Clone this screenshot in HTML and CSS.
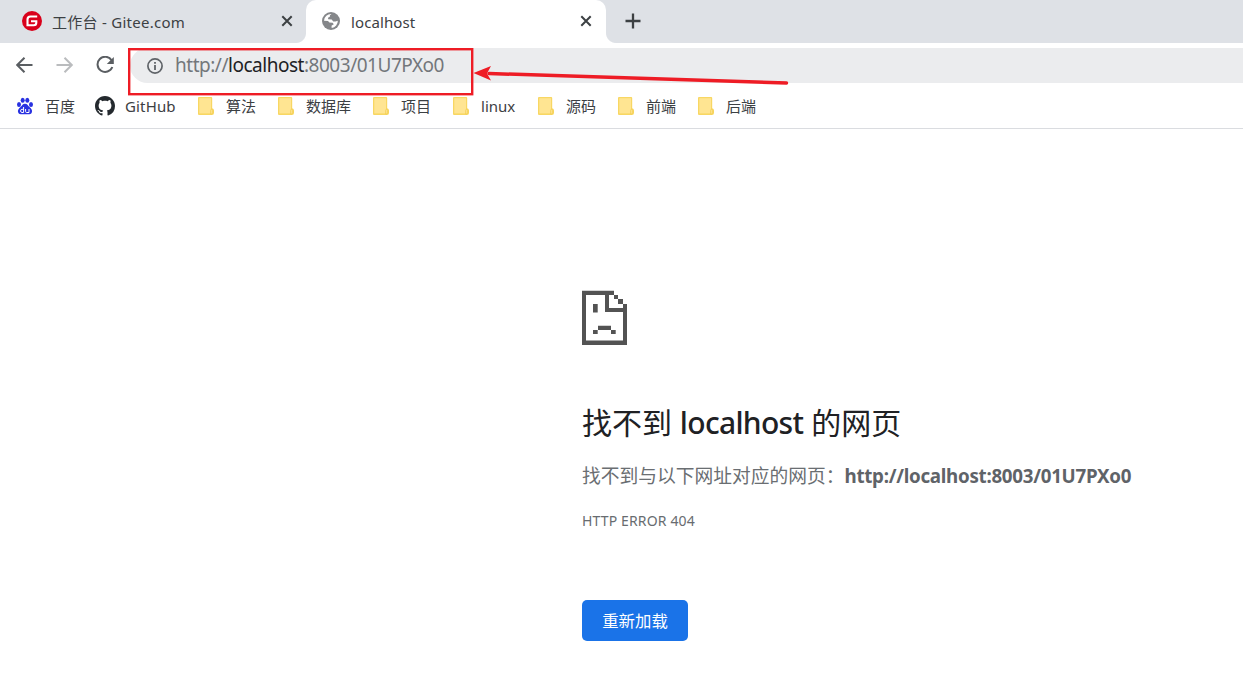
FILE: index.html
```
<!DOCTYPE html>
<html lang="zh-CN">
<head>
<meta charset="utf-8">
<title>localhost</title>
<link rel="stylesheet" href="styles.css">
</head>
<body>
<svg class="defs" width="0" height="0" aria-hidden="true">
  <symbol id="folder" viewBox="0 0 20 20">
    <path d="M3 1h12.200q1 0 1 1v10.200q1.800 .4 1.800 2.300v2.500q0 2-2 2H3q-1 0-1-1V2q0-1 1-1z" fill="#f8d763"/>
    <path d="M3.300 2.200h11.700v15.200H3.300z" fill="#ffe592"/>
    <path d="M14.700 18v-3.500q0-1.300 1-1.300t1 1.300v2q0 1.500-1.300 1.500z" fill="#ffe592" stroke="#f1ca48" stroke-width=".7"/>
  </symbol>
  <symbol id="close" viewBox="0 0 12 12">
    <path d="M1.300 1.300l9.400 9.400M10.700 1.300l-9.400 9.400" stroke="#3c4043" stroke-width="2" fill="none"/>
  </symbol>
</svg>

<header class="browser">
  <div class="tabs">
    <div class="tab tab-gitee">
      <svg class="fav" width="20" height="20" viewBox="0 0 20 20"><circle cx="10" cy="10" r="10" fill="#d9001b"/><path d="M15.200 5.500H8.500Q5.500 5.500 5.500 8.500v5.700h6.300q2.500 0 2.500-2.500v-1.500H9" fill="none" stroke="#fff" stroke-width="2.100"/></svg>
      <span class="tab-title t-gitee">工作台 - Gitee.com</span>
      <svg class="close" width="12" height="12"><use href="#close"/></svg>
    </div>
    <div class="tab tab-active">
      <svg class="globe" width="18" height="18" viewBox="0 0 18 18"><circle cx="9" cy="9" r="9" fill="#85878a"/><path d="M9.500 2.100Q7.300 3.200 7.800 4.700L6 5.700l.2 1.600 3.500.2 1.500 2h2.300l2.300-.7A7 7 0 0 1 9.700 16l-.2-2.200 2.300-1.600-1.200-1.400-3.200-.2L6 9.100 2 8.700a7 7 0 0 1 7.500-6.600z" fill="#fff"/><path d="M2 9.500l3.200.5 2.300 2.100v3.700A7 7 0 0 1 2 9.500z" fill="#85878a"/></svg>
      <span class="tab-title t-local">localhost</span>
      <svg class="close" width="12" height="12"><use href="#close"/></svg>
    </div>
    <svg class="plus" width="16" height="16" viewBox="0 0 16 16"><path d="M8 .5v15M.5 8h15" stroke="#3c4043" stroke-width="2.300"/></svg>
  </div>

  <div class="toolbar">
    <svg width="18" height="18" viewBox="0 0 18 18"><path d="M16.500 9H2M8.500 1.700L1.200 9l7.300 7.300" fill="none" stroke="#5a5e62" stroke-width="2"/></svg>
    <svg width="18" height="18" viewBox="0 0 18 18"><path d="M.5 9h15M8.500 1.700L15.800 9l-7.300 7.300" fill="none" stroke="#babcbe" stroke-width="2"/></svg>
    <svg width="18" height="18" viewBox="0 0 18 18"><path d="M15.600 4.300A7.600 7.600 0 1 0 16.300 11" fill="none" stroke="#5a5e62" stroke-width="2"/><path d="M17.800 1v7h-7z" fill="#5a5e62"/></svg>
    <div class="omnibox">
      <svg class="info" width="16" height="16" viewBox="0 0 16 16"><circle cx="8" cy="8" r="7.100" fill="none" stroke="#5f6368" stroke-width="1.700"/><path d="M8 7v5M8 4v1.800" stroke="#5f6368" stroke-width="1.800"/></svg>
      <span class="url">http://<b>localhost</b>:8003/01U7PXo0</span>
    </div>
  </div>

  <nav class="bookmarks">
    <a class="bm"><svg width="20" height="20" viewBox="0 0 20 20"><g fill="#2932e1"><ellipse cx="4" cy="8.600" rx="2" ry="2.500"/><ellipse cx="7.700" cy="4.200" rx="2" ry="2.500"/><ellipse cx="12.300" cy="4.200" rx="2" ry="2.500"/><ellipse cx="16" cy="8.600" rx="2" ry="2.500"/><path d="M10 7.800c2.200 0 3 1.800 4.500 3.300 2 1.800 3.200 3.400 2.300 5.500-.8 2.100-3 1.700-6.800 1.700s-6 .4-6.800-1.700c-.9-2.100.3-3.700 2.300-5.500C7 9.600 7.800 7.800 10 7.800z"/></g><path d="M8.600 11v5.500H6.900q-1.300 0-1.300-1.600t1.300-1.600h1.700M10.600 13v2.500q0 1 1 1H14V13" fill="none" stroke="#fff" stroke-width="1"/></svg><span>百度</span></a>
    <a class="bm"><svg width="20" height="20" viewBox="0 0 16 16"><path fill="#24292e" d="M8 0C3.580 0 0 3.580 0 8c0 3.540 2.290 6.530 5.470 7.590.4.070.55-.17.55-.38 0-.19-.01-.82-.01-1.490-2.010.37-2.530-.49-2.690-.94-.09-.23-.48-.94-.82-1.130-.28-.15-.68-.52-.01-.53.63-.01 1.080.58 1.230.82.72 1.210 1.870.87 2.330.66.07-.52.28-.87.51-1.070-1.780-.2-3.640-.89-3.640-3.950 0-.87.31-1.590.82-2.150-.08-.2-.36-1.020.08-2.120 0 0 .67-.21 2.200.82.64-.18 1.320-.27 2-.27s1.360.09 2 .27c1.530-1.040 2.200-.82 2.200-.82.44 1.100.16 1.920.08 2.120.51.56.82 1.270.82 2.150 0 3.070-1.870 3.750-3.650 3.950.29.25.54.73.54 1.480 0 1.070-.01 1.930-.01 2.200 0 .21.15.46.55.38A8.010 8.010 0 0 0 16 8c0-4.420-3.580-8-8-8z"/></svg><span class="t-github">GitHub</span></a>
    <a class="bm"><svg width="20" height="20"><use href="#folder"/></svg><span>算法</span></a>
    <a class="bm"><svg width="20" height="20"><use href="#folder"/></svg><span>数据库</span></a>
    <a class="bm"><svg width="20" height="20"><use href="#folder"/></svg><span>项目</span></a>
    <a class="bm"><svg width="20" height="20"><use href="#folder"/></svg><span class="t-linux">linux</span></a>
    <a class="bm"><svg width="20" height="20"><use href="#folder"/></svg><span>源码</span></a>
    <a class="bm"><svg width="20" height="20"><use href="#folder"/></svg><span>前端</span></a>
    <a class="bm"><svg width="20" height="20"><use href="#folder"/></svg><span>后端</span></a>
  </nav>
</header>

<main class="error">
  <svg class="sad" width="46" height="55" viewBox="0 0 46 55"><g fill="#535353"><path d="M0 .7h32v4.300h-5v13h14v-4h4v41H0zM4 5v45.500h37V22H23V5z" fill-rule="evenodd"/><path d="M32 5h4v4h-4zM36 9h5v5h-5zM11 14h4.700v8.500H11zM16 35.700h13V40H16zM11 40h4.700v4H11zM29 40h4.700v4H29z"/></g></svg>
  <h1>找不到 <b>localhost</b> 的网页</h1>
  <p class="summary">找不到与以下网址对应的网页：<strong>http://localhost:8003/01U7PXo0</strong></p>
  <p class="code">HTTP ERROR 404</p>
  <button class="reload">重新加载</button>
</main>

<svg class="annotation" width="664" height="52" viewBox="0 0 664 52"><rect x="2.200" y="2.200" width="343" height="45" fill="none" stroke="#ee1c25" stroke-width="2.400"/><path d="M362 26.500L659.500 36" stroke="#ee1c25" stroke-width="3.500" stroke-linecap="round"/><path d="M346.500 26l17.500-7-4 7.500 4 7z" fill="#ee1c25"/></svg>
</body>
</html>
```
FILE: styles.css
```
* { box-sizing: border-box; }
body {
  margin: 0;
  height: 692px;
  overflow: hidden;
  background: #fff;
  color: #3c4043;
  font-family: "Noto Sans", "Noto Sans CJK SC", sans-serif;
  font-size: 15px;
}
svg { display: block; flex: none; }
.defs { position: absolute; }
.browser { height: 129px; border-bottom: 1px solid #dadce0; }

.tabs { display: flex; height: 43px; background: #dee1e6; }
.tab { display: flex; align-items: center; height: 43px; white-space: nowrap; }
.tab-gitee { width: 306px; padding: 0 13px 1px 22px; }
.tab-active {
  position: relative;
  width: 300px;
  padding: 0 14px 1px 16px;
  background: #fff;
  border-radius: 10px 10px 0 0;
}
.tab-active::before, .tab-active::after {
  content: "";
  position: absolute;
  bottom: 0;
  width: 10px;
  height: 10px;
}
.tab-active::before { left: -10px; background: radial-gradient(circle at 0 0, #dee1e6 9.500px, #fff 10.500px); }
.tab-active::after { right: -10px; background: radial-gradient(circle at 100% 0, #dee1e6 9.500px, #fff 10.500px); }
.tab-title { margin-top: 1px; line-height: 22px; }
.fav { margin-right: 10px; }
.globe { margin-right: 11px; }
.close { margin-left: auto; }
.plus { margin: 13px 0 0 19px; }
.t-gitee { letter-spacing: .27px; }
.t-local { letter-spacing: .1px; }

.toolbar { display: flex; height: 43px; padding: 13px 0 0 16px; gap: 22px; }
.omnibox {
  display: flex;
  align-items: center;
  flex: 1;
  height: 35px;
  margin: -8px 0 0 -6px;
  padding-left: 17px;
  background: #ebecee;
  border-radius: 18px 0 0 18px;
}
.info { margin-right: 12px; }
.url { font-size: 19px; line-height: 28px; letter-spacing: -.48px; margin-top: -1px; color: #73777b; white-space: nowrap; }
.url b { font-weight: 400; color: #202124; }

.bookmarks { display: flex; gap: 20px; padding: 10px 0 0 15px; }
.bm { display: flex; align-items: center; gap: 10px; height: 20px; line-height: 20px; white-space: nowrap; }
.t-github { width: 51px; letter-spacing: .15px; }
.t-linux { width: 35px; }

.error { padding: 161px 0 0 582px; white-space: nowrap; }
.error h1 { margin: 57px 0 0; font-size: 30px; line-height: 42px; font-weight: 400; color: #202124; }
.error h1 b { font-weight: 500; letter-spacing: -.68px; }
.summary { margin: 18px 0 0; font-size: 18.750px; line-height: 28px; font-weight: 400; color: #6a6e72; }
.summary strong { font-weight: 700; letter-spacing: -.28px; color: #5f6368; }
.code { margin: 20px 0 0; font-size: 14px; line-height: 22px; letter-spacing: .15px; color: #686c70; }
.reload {
  display: block;
  width: 106px;
  height: 41px;
  margin: 68px 0 0;
  padding: 0;
  border: 0;
  border-radius: 5px;
  background: #1a73e8;
  color: #fff;
  font: 16.400px/41px "Noto Sans", "Noto Sans CJK SC", sans-serif;
}
.annotation { position: absolute; left: 127px; top: 47px; }
```
